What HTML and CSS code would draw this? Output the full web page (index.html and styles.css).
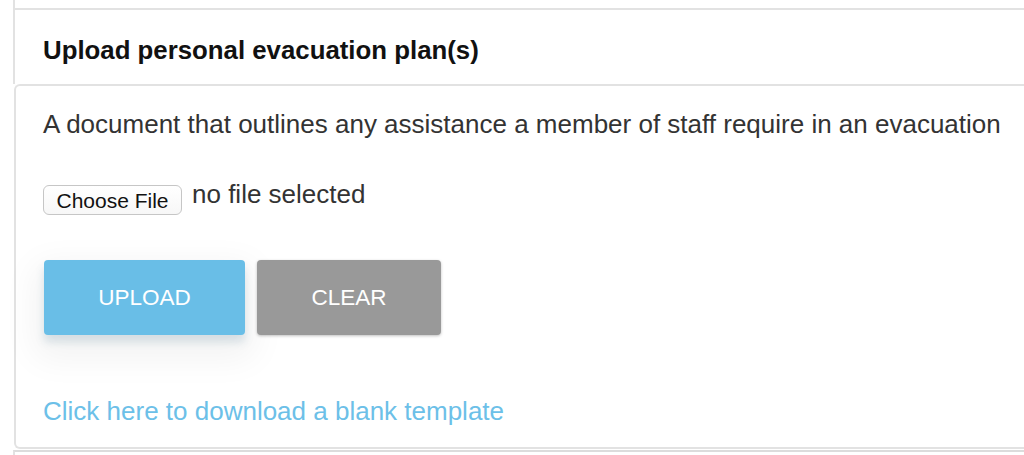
FILE: index.html
```html
<!DOCTYPE html>
<html lang="en">
<head>
<meta charset="utf-8">
<title>Upload personal evacuation plan(s)</title>
<link rel="stylesheet" href="styles.css">
</head>
<body>
<div class="stack">
  <div class="panel-prev"></div>
  <div class="panel-head">
    <h2 class="panel-title">Upload personal evacuation plan(s)</h2>
  </div>
  <div class="panel-body">
    <p class="desc">A document that outlines any assistance a member of staff require in an evacuation</p>
    <div class="file-row">
      <button type="button" class="file-btn">Choose File</button>
      <span class="file-name">no file selected</span>
    </div>
    <div class="actions">
      <button type="button" class="btn btn-upload">UPLOAD</button>
      <button type="button" class="btn btn-clear">CLEAR</button>
    </div>
    <a class="template-link" href="#">Click here to download a blank template</a>
  </div>
  <div class="panel-next"></div>
</div>
</body>
</html>
```
FILE: styles.css
```css
html, body {
  margin: 0;
  padding: 0;
  background: #ffffff;
  overflow: hidden;
}

body {
  font-family: "Liberation Sans", Helvetica, Arial, sans-serif;
  color: #333333;
  height: 455px;
}

.stack {
  margin-left: 13px;
}

.panel-prev {
  height: 8px;
  border-left: 2px solid #e2e2e2;
}

.panel-head {
  height: 74px;
  border-left: 2px solid #e2e2e2;
  border-top: 2px solid #e2e2e2;
  padding-left: 28px;
  display: flex;
  align-items: center;
}

.panel-title {
  margin: 0;
  font-size: 25.8px;
  font-weight: bold;
  color: #111111;
  line-height: 30px;
  padding-top: 5px;
}

.panel-body {
  margin-left: 1px;
  border: 2px solid #e2e2e2;
  border-right: none;
  border-radius: 6px 0 0 6px;
  padding: 20px 0 18px 27px;
  display: flex;
  flex-direction: column;
  align-items: flex-start;
}

.desc {
  margin: 0;
  font-size: 26px;
  line-height: 36px;
  color: #333333;
}

.file-row {
  margin-top: 43px;
  display: flex;
  align-items: flex-start;
  gap: 10px;
}

.file-btn {
  box-sizing: border-box;
  width: 139px;
  height: 30px;
  padding: 0;
  font-family: "Liberation Sans", Helvetica, Arial, sans-serif;
  font-size: 21px;
  line-height: 29px;
  color: #111111;
  background: linear-gradient(#ffffff, #f7f7f7);
  border: 1px solid #c6c6c6;
  border-radius: 6px;
}

.file-name {
  font-size: 26px;
  line-height: 26px;
  margin-top: -4px;
  color: #333333;
}

.actions {
  margin-top: 45px;
  display: flex;
  gap: 12px;
  padding-left: 1px;
}

.btn {
  height: 75px;
  padding: 0;
  border: none;
  border-radius: 4px;
  font-family: "Liberation Sans", Helvetica, Arial, sans-serif;
  font-size: 22.5px;
  color: #ffffff;
}

.btn-upload {
  width: 201px;
  background: #69bee7;
  box-shadow: 0 7px 8px rgba(70, 120, 150, 0.18), 0 14px 34px 10px rgba(0, 0, 0, 0.05);
}

.btn-clear {
  width: 184px;
  background: #999999;
  box-shadow: 0 1px 3px rgba(0, 0, 0, 0.25);
}

.template-link {
  margin-top: 58px;
  font-size: 26px;
  line-height: 36px;
  color: #6cc0e8;
  text-decoration: none;
}

.panel-next {
  margin-top: 1px;
  border-top: 2px solid #dcdcdc;
  border-left: 2px solid #e2e2e2;
  height: 10px;
}
```
